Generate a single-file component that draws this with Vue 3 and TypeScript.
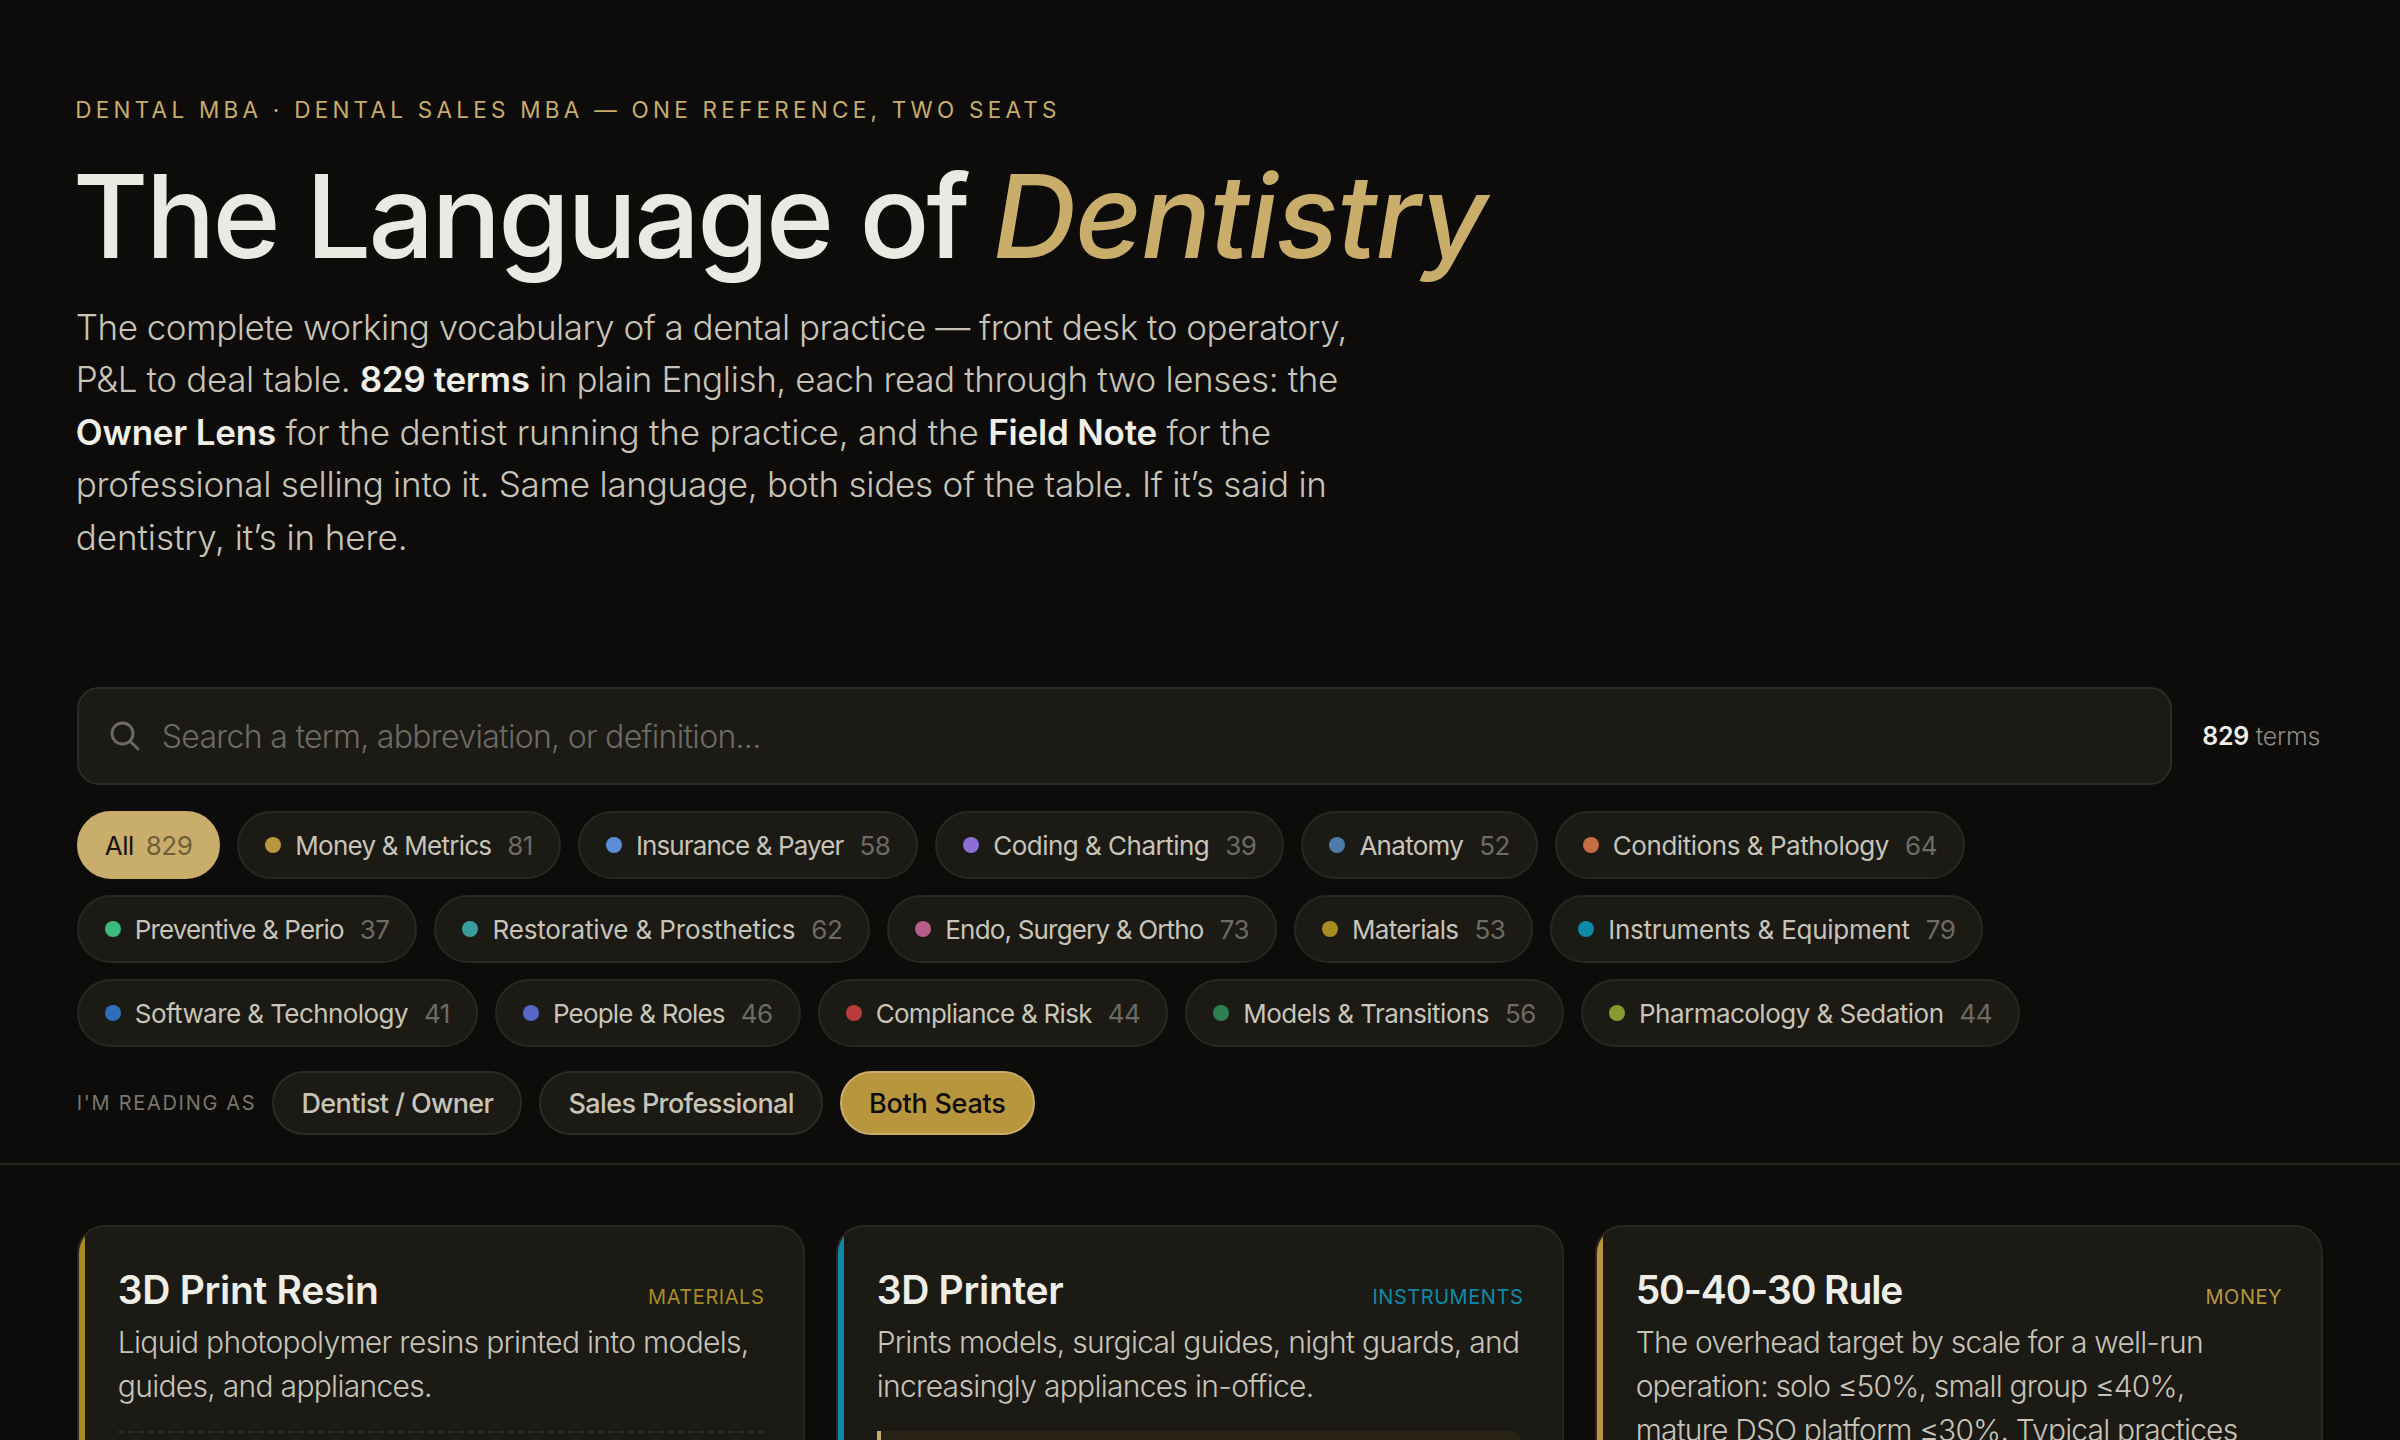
<script setup lang="ts">
interface Chip { name: string; count: number; color: string; fit: number }
const rows: Chip[][] = [
  [
    { name: 'Money & Metrics', count: 81, color: '#b8963e', fit: -0.24 },
    { name: 'Insurance & Payer', count: 58, color: '#5b8dd9', fit: -0.36 },
    { name: 'Coding & Charting', count: 39, color: '#8b6fd4', fit: 0 },
    { name: 'Anatomy', count: 52, color: '#4f7ba8', fit: -0.2 },
    { name: 'Conditions & Pathology', count: 64, color: '#c46d42', fit: 0.07 },
  ],
  [
    { name: 'Preventive & Perio', count: 37, color: '#3dba7e', fit: -0.34 },
    { name: 'Restorative & Prosthetics', count: 62, color: '#3a9d9d', fit: 0.37 },
    { name: 'Endo, Surgery & Ortho', count: 73, color: '#b85c8a', fit: -0.3 },
    { name: 'Materials', count: 53, color: '#a88c22', fit: -0.17 },
    { name: 'Instruments & Equipment', count: 79, color: '#0e8aa8', fit: 0.27 },
  ],
  [
    { name: 'Software & Technology', count: 41, color: '#2e6fb8', fit: -0.05 },
    { name: 'People & Roles', count: 46, color: '#5566c4', fit: -0.28 },
    { name: 'Compliance & Risk', count: 44, color: '#b83c3c', fit: -0.2 },
    { name: 'Models & Transitions', count: 56, color: '#2e8050', fit: 0 },
    { name: 'Pharmacology & Sedation', count: 44, color: '#8a9a30', fit: 0 },
  ],
]
const roles = ['Dentist / Owner', 'Sales Professional', 'Both Seats']
interface Card { title: string; fit: number; defFit: number; tag: string; color: string; def: string; kind: 'rule' | 'note' | 'none' }
const cards: Card[] = [
  { title: '3D Print Resin', fit: 0, defFit: 0, tag: 'MATERIALS', color: '#a88c22', def: 'Liquid photopolymer resins printed into models, guides, and appliances.', kind: 'rule' },
  { title: '3D Printer', fit: 0, defFit: 0, tag: 'INSTRUMENTS', color: '#0e8aa8', def: 'Prints models, surgical guides, night guards, and increasingly appliances in-office.', kind: 'note' },
  { title: '50-40-30 Rule', fit: -0.8, defFit: -0.12, tag: 'MONEY', color: '#b8963e', def: 'The overhead target by scale for a well-run operation: solo ≤50%, small group ≤40%, mature DSO platform ≤30%. Typical practices', kind: 'none' },
]
</script>

<template>
  <div class="page">
    <header class="hero">
      <p class="eyebrow">DENTAL MBA · DENTAL SALES MBA — ONE REFERENCE, TWO SEATS</p>
      <h1 class="headline">The Language of <em>Dentistry</em></h1>
      <p class="intro">
        <span class="line l1">The complete working vocabulary of a dental practice — front desk to operatory,</span>
        <span class="line l2">P&amp;L to deal table. <strong>829 terms</strong> in plain English, each read through two lenses: the</span>
        <span class="line l3"><strong>Owner Lens</strong> for the dentist running the practice, and the <strong>Field Note</strong> for the</span>
        <span class="line l4">professional selling into it. Same language, both sides of the table. If it’s said in</span>
        <span class="line l5">dentistry, it’s in here.</span>
      </p>
    </header>

    <section class="controls">
      <div class="search-row">
        <label class="search">
          <svg class="search-icon" viewBox="0 0 30 30" fill="none" stroke="currentColor" stroke-width="2.8" stroke-linecap="round" stroke-linejoin="round">
            <circle cx="12.5" cy="12.5" r="10.5" />
            <path d="M20.4 20.4L28 28" />
          </svg>
          <input class="search-input" type="text" placeholder="Search a term, abbreviation, or definition..." />
        </label>
        <div class="total"><b>829</b> terms</div>
      </div>

      <div class="chips">
        <div v-for="(row, i) in rows" :key="i" class="chip-row">
          <button v-if="i === 0" class="chip chip-all">All <span class="count">829</span></button>
          <button v-for="chip in row" :key="chip.name" class="chip">
            <span class="dot" :style="{ background: chip.color }"></span>
            <span class="chip-name" :style="{ letterSpacing: -0.52 + chip.fit + 'px' }">{{ chip.name }}</span>
            <span class="count">{{ chip.count }}</span>
          </button>
        </div>
      </div>

      <div class="roles">
        <span class="roles-label">I'M READING AS</span>
        <button v-for="(r, i) in roles" :key="r" class="role" :class="{ active: i === 2 }">{{ r }}</button>
      </div>
    </section>

    <main class="grid">
      <article v-for="card in cards" :key="card.title" class="card">
        <span class="accent" :style="{ background: card.color }"></span>
        <div class="card-head">
          <h2 class="card-title" :style="{ letterSpacing: -0.3 + card.fit + 'px' }">{{ card.title }}</h2>
          <span class="card-tag" :style="{ color: card.color }">{{ card.tag }}</span>
        </div>
        <p class="card-def" :style="{ letterSpacing: -0.7 + card.defFit + 'px' }">{{ card.def }}</p>
        <div v-if="card.kind === 'rule'" class="card-rule"></div>
        <div v-if="card.kind === 'note'" class="card-note"></div>
      </article>
    </main>
  </div>
</template>

<style>
html, body { margin: 0; height: 100%; overflow: hidden; background: #0d0c0a; }
</style>

<style scoped>
.page {
  font-family: Inter, "Liberation Sans", sans-serif;
  color: #c8c4b8;
  background: #0d0c0a;
}
.hero { padding: 97px 76.8px 0; }
.eyebrow {
  margin: 0 0 0 -1.5px;
  font-size: 22.5px;
  line-height: 26px;
  letter-spacing: 4.25px;
  color: #c9ad6a;
}
.headline {
  margin: 32px 0 0 -4px;
  font-size: 116px;
  line-height: 122px;
  font-weight: 500;
  letter-spacing: -2.9px;
  color: #eae9e2;
}
.headline em { font-style: italic; font-weight: 500; letter-spacing: -1.25px; margin-left: -3px; color: #c9ad6a; }
.intro {
  margin: 24px 0 0 -1px;
  font-size: 35px;
  line-height: 52.4px;
  font-weight: 300;
}
.line { display: block; white-space: nowrap; }
.l1 { letter-spacing: -0.5px; }
.l2 { letter-spacing: -0.37px; }
.l3 { letter-spacing: -0.21px; }
.l4 { letter-spacing: -0.25px; }
.l5 { letter-spacing: -0.09px; }
.intro strong { font-weight: 600; color: #f0efe8; }

.controls {
  padding: 124px 76.8px 28px;
  border-bottom: 2px solid #2a2722;
}
.search-row { display: flex; align-items: center; gap: 30px; }
.search {
  flex: 1;
  height: 98px;
  box-sizing: border-box;
  display: flex;
  align-items: center;
  gap: 22px;
  padding: 0 31px;
  background: #1b1a15;
  border: 2px solid #2e2a25;
  border-radius: 22px;
}
.search-icon { width: 30px; height: 30px; color: #6e6b64; flex: none; }
.search-input {
  flex: 1;
  border: 0;
  outline: 0;
  padding: 0;
  background: transparent;
  font: 300 32px Inter, sans-serif;
  letter-spacing: -0.7px;
  color: #c8c4b8;
}
.search-input::placeholder { color: #6e6b64; opacity: 1; }
.total { width: 121px; font-size: 25px; font-weight: 300; color: #8f8b82; white-space: nowrap; letter-spacing: -0.25px; }
.total b { font-weight: 600; color: #f0efe8; }

.chips { margin-top: 26px; display: flex; flex-direction: column; gap: 16px; }
.chip-row { display: flex; gap: 17px; }
.chip {
  height: 68px;
  box-sizing: border-box;
  display: flex;
  align-items: center;
  gap: 14px;
  padding: 0 26px;
  background: #1b1a15;
  border: 2px solid #2a2722;
  border-radius: 34px;
  font-family: inherit;
  font-size: 26px;
  font-weight: 400;
  letter-spacing: -0.52px;
  color: #c8c4b8;
  white-space: nowrap;
}
.chip .count { color: #6e6b64; margin-left: 2px; letter-spacing: -0.5px; }
.chip-all { background: #c9ad6a; border-color: #c9ad6a; color: #14130f; gap: 10px; padding-right: 26px; }
.chip-all .count { color: #6e5f38; }
.dot { width: 16px; height: 16px; border-radius: 50%; flex: none; }

.roles { margin-top: 24px; display: flex; align-items: center; gap: 17px; }
.roles-label { font-size: 20px; letter-spacing: 1.7px; color: #7a766e; margin-right: -1px; }
.role {
  height: 64px;
  box-sizing: border-box;
  padding: 0 27px;
  background: #1b1a15;
  border: 2px solid #2e2a25;
  border-radius: 32px;
  font-family: inherit;
  font-size: 27px;
  font-weight: 500;
  letter-spacing: -0.62px;
  color: #c8c4b8;
  white-space: nowrap;
}
.role.active { background: #b8963e; border-color: #c9ad6a; color: #0d0c0a; letter-spacing: -0.25px; }

.grid {
  padding: 60px 76.8px 0;
  display: grid;
  grid-template-columns: repeat(3, 1fr);
  gap: 30.4px;
}
.card {
  position: relative;
  overflow: hidden;
  box-sizing: border-box;
  min-height: 420px;
  padding: 40px 39px 0 39px;
  background: #1b1a15;
  border: 2px solid #2a2722;
  border-radius: 28px;
}
.accent { position: absolute; left: 0; top: 0; bottom: 0; width: 6px; }
.card-head { display: flex; justify-content: space-between; align-items: baseline; }
.card-title {
  margin: 0;
  font-size: 39px;
  line-height: 46px;
  font-weight: 600;
  color: #eeede6;
}
.card-tag { font-size: 20px; letter-spacing: 0.55px; font-weight: 400; }
.card-def {
  margin: 6.5px 0 0;
  font-size: 30px;
  line-height: 44px;
  font-weight: 300;
  color: #c8c4b8;
}
.card-rule { margin-top: 23px; border-top: 2px dashed #2e2a25; }
.card-note {
  margin-top: 23px;
  height: 100px;
  background: #2a2318;
  border-left: 4px solid #c9ad6a;
  border-radius: 0 14px 14px 0;
}
</style>
